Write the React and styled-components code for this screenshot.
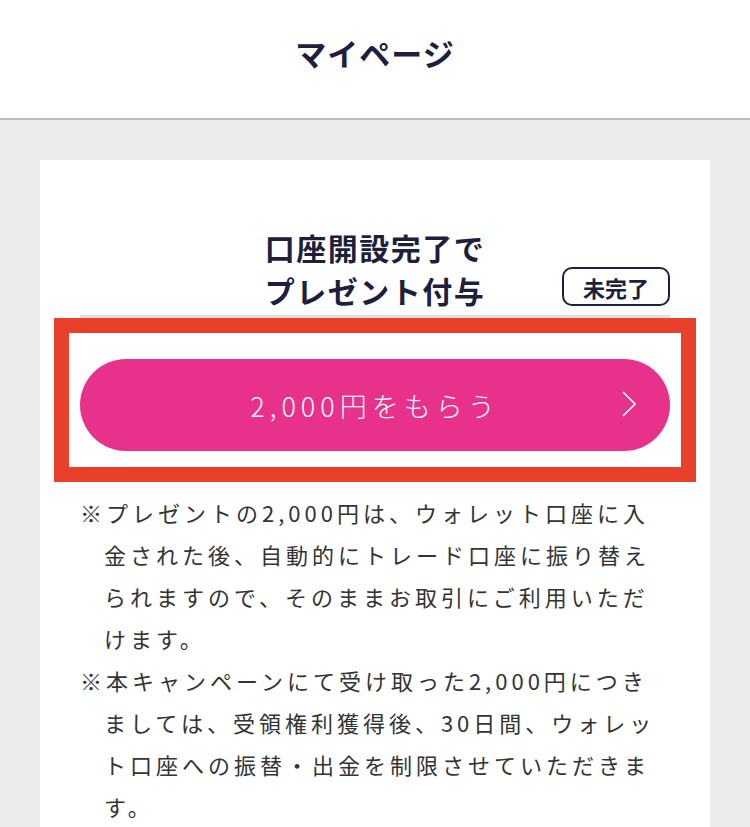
import React from 'react'
import styled, { createGlobalStyle } from 'styled-components'

const GlobalStyle = createGlobalStyle`
  html, body {
    margin: 0;
    padding: 0;
    background: #ececec;
  }
  body {
    font-family: "Noto Sans CJK JP", "Noto Sans", sans-serif;
    -webkit-font-smoothing: antialiased;
  }
`

const notes = [
  [
    '※プレゼントの2,000円は、ウォレット口座に入',
    '金された後、自動的にトレード口座に振り替え',
    'られますので、そのままお取引にご利用いただ',
    'けます。',
  ],
  [
    '※本キャンペーンにて受け取った2,000円につき',
    'ましては、受領権利獲得後、30日間、ウォレッ',
    'ト口座への振替・出金を制限させていただきま',
    'す。',
  ],
]

export default function App() {
  return (
    <>
      <GlobalStyle />
      <Header>
        <PageTitle>マイページ</PageTitle>
      </Header>
      <Main>
        <Card>
          <TitleRow>
            <span />
            <CardTitle>
              口座開設完了で
              <br />
              プレゼント付与
            </CardTitle>
            <Badge>未完了</Badge>
          </TitleRow>
          <Divider />
          <ButtonArea>
            <CtaButton type="button">
              2,000円をもらう
              <Chevron width="14" height="26" viewBox="0 0 14 26">
                <path d="M1 1 L13 13 L1 25" fill="none" stroke="#fff" strokeWidth="1.6" />
              </Chevron>
            </CtaButton>
            <Highlight />
          </ButtonArea>
          <Notes>
            {notes.map((lines, i) => (
              <Note key={i}>
                {lines.map((line, j) => (
                  <React.Fragment key={j}>
                    {line}
                    {j < lines.length - 1 && <br />}
                  </React.Fragment>
                ))}
              </Note>
            ))}
          </Notes>
        </Card>
      </Main>
    </>
  )
}

const Header = styled.header`
  height: 120px;
  padding-bottom: 14px;
  box-sizing: border-box;
  background: #fff;
  border-bottom: 2px solid #bcbcbc;
  display: flex;
  align-items: center;
  justify-content: center;
`

const PageTitle = styled.h1`
  margin: 0;
  font-size: 31px;
  font-weight: 700;
  letter-spacing: 1px;
  color: #1c1f3d;
`

const Main = styled.main`
  padding: 40px 40px 0;
  min-height: 707px;
  box-sizing: border-box;
`

const Card = styled.section`
  background: #fff;
  padding: 66px 40px 40px;
`

const TitleRow = styled.div`
  display: grid;
  grid-template-columns: 1fr auto 1fr;
  align-items: end;
`

const CardTitle = styled.h2`
  margin: 0;
  text-align: center;
  font-size: 30px;
  line-height: 43px;
  font-weight: 700;
  letter-spacing: 1.5px;
  color: #1c1f3d;
`

const Badge = styled.span`
  justify-self: end;
  margin-bottom: 6px;
  height: 39px;
  box-sizing: border-box;
  padding: 0 19px;
  display: flex;
  align-items: center;
  border: 2px solid #1c1f3d;
  border-radius: 10px;
  font-size: 22px;
  font-weight: 700;
  color: #1c1f3d;
`

const Divider = styled.div`
  margin-top: 3px;
  height: 3px;
  background: #e4dfdc;
`

const ButtonArea = styled.div`
  position: relative;
  padding-top: 41px;
`

const CtaButton = styled.button`
  position: relative;
  width: 100%;
  height: 92px;
  border: 0;
  border-radius: 46px;
  background: #e8318a;
  color: #fff;
  font-family: inherit;
  font-size: 27px;
  font-weight: 300;
  letter-spacing: 5px;
  display: flex;
  align-items: center;
  justify-content: center;
  cursor: pointer;
`

const Chevron = styled.svg`
  position: absolute;
  right: 34px;
  top: 50%;
  margin-top: -14px;
`

const Highlight = styled.div`
  position: absolute;
  top: 0;
  left: -26px;
  right: -26px;
  bottom: -31px;
  border: 15px solid #e8402a;
  pointer-events: none;
`

const Notes = styled.div`
  margin-top: 40px;
`

const Note = styled.p`
  margin: 0;
  padding-left: 24px;
  text-indent: -24px;
  white-space: nowrap;
  font-size: 22px;
  line-height: 42px;
  letter-spacing: 4px;
  color: #333;
`
